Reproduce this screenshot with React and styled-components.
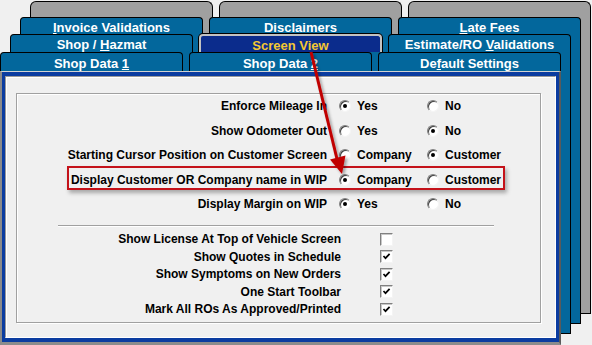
import styled, { createGlobalStyle } from 'styled-components';

const GlobalStyle = createGlobalStyle`
  html, body {
    margin: 0;
    padding: 0;
    background: #f0f0f0;
  }
  body {
    font-family: "Liberation Sans", Arial, sans-serif;
  }
  * {
    box-sizing: border-box;
  }
`;

const backPages = [
  {
    top: 1,
    left: 30,
    height: 313,
    tabH: 16,
    kind: 'grey',
    tabs: [null, null, null],
  },
  {
    top: 17,
    left: 20,
    height: 307,
    tabH: 17,
    kind: 'blue',
    tabs: [
      ['', 'I', 'nvoice Validations'],
      ['Dis', 'c', 'laimers'],
      ['', 'L', 'ate Fees'],
    ],
  },
  {
    top: 34,
    left: 10,
    height: 300,
    tabH: 18,
    kind: 'blue',
    tabs: [
      ['Shop / ', 'H', 'azmat'],
      ['Screen View', '', '', true],
      ['Estimate/RO ', 'V', 'alidations'],
    ],
  },
];

const frontTabs = [
  ['Shop Data ', '1', ''],
  ['Shop Data ', '2', ''],
  ['De', 'f', 'ault Settings'],
];

const radioRows = [
  { label: 'Enforce Mileage In', options: ['Yes', 'No'], checked: 0 },
  { label: 'Show Odometer Out', options: ['Yes', 'No'], checked: 1 },
  {
    label: 'Starting Cursor Position on Customer Screen',
    options: ['Company', 'Customer'],
    checked: 1,
  },
  {
    label: 'Display Customer OR Company name in WIP',
    options: ['Company', 'Customer'],
    checked: 0,
  },
  { label: 'Display Margin on WIP', options: ['Yes', 'No'], checked: 0 },
];

const checkRows = [
  { label: 'Show License At Top of Vehicle Screen', checked: false },
  { label: 'Show Quotes in Schedule', checked: true },
  { label: 'Show Symptoms on New Orders', checked: true },
  { label: 'One Start Toolbar', checked: true },
  { label: 'Mark All ROs As Approved/Printed', checked: true },
];

function TabLabel({ tab }) {
  if (!tab) return null;
  const [before, key, after] = tab;
  return (
    <span>
      {before}
      {key && <u>{key}</u>}
      {after}
    </span>
  );
}

export default function App() {
  return (
    <>
      <GlobalStyle />
      <Stage>
        {backPages.map((page, i) => (
          <Page
            key={i}
            $top={page.top}
            $left={page.left}
            $height={page.height}
          >
            <TabRow $h={page.tabH}>
              {page.tabs.map((tab, j) => (
                <Tab
                  key={j}
                  $kind={tab && tab[3] ? 'selected' : page.kind}
                >
                  <TabLabel tab={tab} />
                </Tab>
              ))}
            </TabRow>
            <BackBody $kind={page.kind} />
          </Page>
        ))}

        <Page $top={52} $left={0} $height={293}>
          <TabRow $h={19}>
            {frontTabs.map((tab, j) => (
              <Tab key={j} $kind="blue">
                <TabLabel tab={tab} />
              </Tab>
            ))}
          </TabRow>
          <FrontBody>
            <Sheet>
              <GroupBox>
                <RadioList>
                  {radioRows.map((row) => (
                    <RadioRow key={row.label}>
                      <Label>{row.label}</Label>
                      {row.options.map((opt, k) => (
                        <Option key={opt}>
                          <Radio $checked={row.checked === k} />
                          <span>{opt}</span>
                        </Option>
                      ))}
                    </RadioRow>
                  ))}
                </RadioList>
                <Separator />
                <CheckList>
                  {checkRows.map((row) => (
                    <CheckRow key={row.label}>
                      <Label>{row.label}</Label>
                      <CheckBox>
                        {row.checked && (
                          <svg width="9" height="9" viewBox="0 0 9 9">
                            <path
                              d="M1.5 4 L3.5 6.2 L7.6 1.8"
                              fill="none"
                              stroke="#000"
                              strokeWidth="1.7"
                            />
                          </svg>
                        )}
                      </CheckBox>
                    </CheckRow>
                  ))}
                </CheckList>
                <Highlight />
              </GroupBox>
            </Sheet>
          </FrontBody>
        </Page>

        <ArrowLayer viewBox="0 0 592 345" width="592" height="345">
          <defs>
            <filter id="sh" x="-50%" y="-50%" width="200%" height="200%">
              <feDropShadow
                dx="2"
                dy="2"
                stdDeviation="1.5"
                floodColor="#000"
                floodOpacity="0.35"
              />
            </filter>
          </defs>
          <g filter="url(#sh)">
            <line
              x1="311"
              y1="52"
              x2="337"
              y2="159"
              stroke="#c00000"
              strokeWidth="3"
            />
            <polygon points="342,174 330,159.5 345.5,155.5" fill="#c00000" />
          </g>
        </ArrowLayer>
      </Stage>
    </>
  );
}

const Stage = styled.div`
  position: relative;
  display: grid;
  width: 592px;
  height: 345px;
  overflow: hidden;
  background: #f0f0f0;
`;

const Page = styled.div`
  grid-area: 1 / 1;
  align-self: start;
  justify-self: start;
  margin: ${({ $top }) => $top}px 0 0 ${({ $left }) => $left}px;
  width: 561px;
  height: ${({ $height }) => $height}px;
  display: flex;
  flex-direction: column;
`;

const TabRow = styled.div`
  display: flex;
  gap: 6px;
  height: ${({ $h }) => $h}px;
  flex-shrink: 0;
`;

const tabColors = {
  grey: { bg: '#a0a0a0', fg: '#ffffff' },
  blue: { bg: '#03679c', fg: '#ffffff' },
  selected: { bg: '#0b2c8c', fg: '#f4c832' },
};

const Tab = styled.div`
  width: 183px;
  height: 100%;
  display: flex;
  align-items: center;
  justify-content: center;
  padding-top: 2px;
  background: ${({ $kind }) => tabColors[$kind].bg};
  color: ${({ $kind }) => tabColors[$kind].fg};
  border: ${({ $kind }) =>
    $kind === 'selected' ? '2px solid #c2c2c2' : '1px solid #000'};
  border-bottom: none;
  border-radius: ${({ $kind }) => ($kind === 'grey' ? '6px 6px 0 0' : '4px 4px 0 0')};
  box-shadow: ${({ $kind }) => ($kind === 'selected' ? '0 0 0 1px #000' : 'none')};
  font-size: 13px;
  font-weight: 700;
  white-space: nowrap;

  u {
    text-decoration-thickness: 1px;
    text-underline-offset: 1px;
  }
`;

const BackBody = styled.div`
  flex: 1;
  background: ${({ $kind }) => tabColors[$kind].bg};
  border: 1px solid #000;
  border-top: none;
`;

const FrontBody = styled.div`
  flex: 1;
  display: flex;
  background: #0b3ca0;
  border-top: 1px solid #d2d2d2;
  border-left: 2px solid #8a8a8a;
  border-right: 2px solid #5a5a5a;
  border-bottom: 3px solid #8c8c8c;
  padding: 4px 3px 4px 3px;
`;

const Sheet = styled.div`
  flex: 1;
  background: #f0f0f0;
  border: 1px solid;
  border-color: #9a9a9a #ffffff #ffffff #9a9a9a;
  box-shadow: inset 1px 1px 0 #ffffff;
  padding: 16px 0 0 10px;
`;

const GroupBox = styled.div`
  position: relative;
  width: 525px;
  height: 230px;
  border: 1px solid #a0a0a0;
  box-shadow: inset 1px 1px 0 #ffffff, 1px 1px 0 #ffffff;
`;

const RadioList = styled.div`
  display: flex;
  flex-direction: column;
`;

const RadioRow = styled.div`
  display: grid;
  grid-template-columns: 310px 76px 1fr;
  column-gap: 12px;
  align-items: center;
  height: 24.5px;
`;

const Label = styled.div`
  text-align: right;
  font-size: 12px;
  font-weight: 700;
  color: #000;
  white-space: nowrap;
`;

const Option = styled.div`
  display: flex;
  align-items: center;
  gap: 6px;
  font-size: 12px;
  font-weight: 700;
  color: #000;
`;

const Radio = styled.span`
  position: relative;
  width: 12px;
  height: 12px;
  flex-shrink: 0;
  border-radius: 50%;
  background: #fff;
  border: 1px solid;
  border-color: #808080 #f4f4f4 #f4f4f4 #808080;
  box-shadow: inset 1px 1px 0 #404040;

  &::after {
    content: '';
    display: ${({ $checked }) => ($checked ? 'block' : 'none')};
    position: absolute;
    left: 3px;
    top: 3px;
    width: 4px;
    height: 4px;
    border-radius: 50%;
    background: #000;
  }
`;

const Separator = styled.div`
  margin: 8px 0 0 41px;
  width: 436px;
  border-top: 1px solid #a0a0a0;
  border-bottom: 1px solid #ffffff;
`;

const CheckList = styled.div`
  display: flex;
  flex-direction: column;
  margin-top: 4px;
`;

const CheckRow = styled.div`
  display: grid;
  grid-template-columns: 324px 13px;
  column-gap: 39px;
  align-items: center;
  height: 17.5px;
`;

const CheckBox = styled.span`
  width: 13px;
  height: 13px;
  display: flex;
  align-items: center;
  justify-content: center;
  background: #fff;
  border: 1px solid;
  border-color: #808080 #f4f4f4 #f4f4f4 #808080;
  box-shadow: inset 1px 1px 0 #c8c8c8;
`;

const Highlight = styled.div`
  position: absolute;
  left: 50px;
  top: 72px;
  width: 438px;
  height: 24px;
  border: 2px solid #c4121a;
  box-shadow: 2px 3px 4px rgba(0, 0, 0, 0.3);
  pointer-events: none;
`;

const ArrowLayer = styled.svg`
  position: absolute;
  left: 0;
  top: 0;
  pointer-events: none;
`;
